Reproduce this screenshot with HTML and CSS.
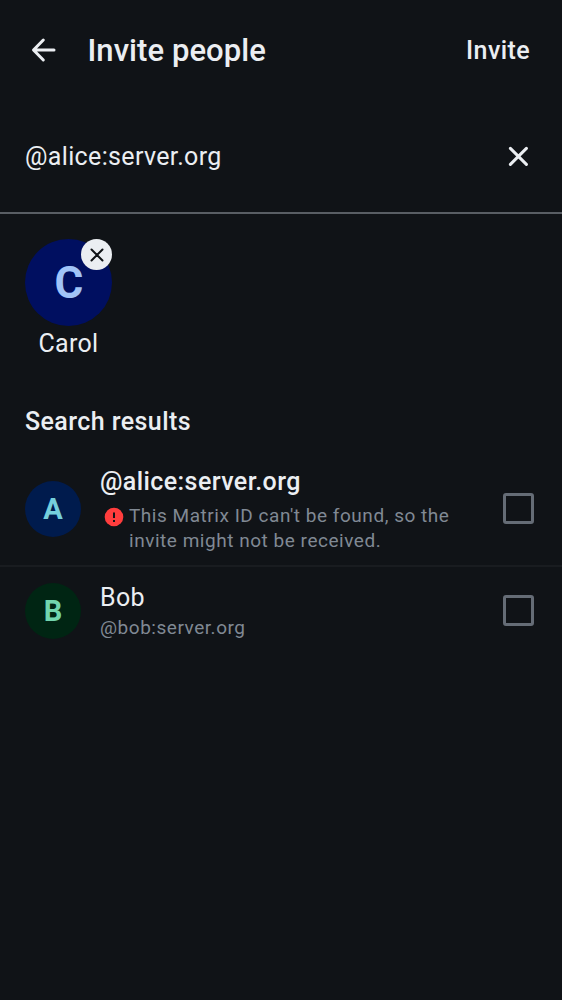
FILE: index.html
```html
<!DOCTYPE html>
<html lang="en">
<head>
<meta charset="utf-8">
<title>Invite people</title>
<link rel="stylesheet" href="styles.css">
</head>
<body>
<header class="topbar">
  <svg class="back" viewBox="0 0 37 37"><path d="M18.3 9L8.5 19l9.8 10M9 19H29"/></svg>
  <h1 class="title">Invite people</h1>
  <span class="invite">Invite</span>
</header>
<div class="search">
  <span class="query">@alice:server.org</span>
  <svg class="clear" viewBox="0 0 20 20"><path d="M2.4 2.4l16 16M18.4 2.4l-16 16"/></svg>
</div>
<section class="selected">
  <div class="person">
    <div class="avatar large">C
      <span class="remove"><svg viewBox="0 0 14 14"><path d="M1.5 1.5l11 11M12.5 1.5l-11 11"/></svg></span>
    </div>
    <span class="person-name">Carol</span>
  </div>
</section>
<h2 class="heading">Search results</h2>
<main class="results">
  <div class="row first">
    <div class="avatar blue">A</div>
    <div class="info">
      <div class="name strong">@alice:server.org</div>
      <div class="warning">
        <svg class="error" viewBox="0 0 20 20"><circle cx="10" cy="10" r="9.3"/><path d="M10 5.4v5.6M10 13v2"/></svg>
        <p class="detail">This Matrix ID can't be found, so the<br>invite might not be received.</p>
      </div>
    </div>
    <span class="checkbox"></span>
  </div>
  <div class="row second">
    <div class="avatar green">B</div>
    <div class="info">
      <div class="name">Bob</div>
      <div class="detail">@bob:server.org</div>
    </div>
    <span class="checkbox"></span>
  </div>
</main>
</body>
</html>
```
FILE: styles.css
```css
* { box-sizing: border-box; }
body { margin: 0; width: 562px; height: 1000px; background: #101317; color: #ebeef2; font-family: Roboto, sans-serif; overflow: hidden; }
svg { display: block; fill: none; stroke: currentColor; stroke-linecap: round; stroke-linejoin: round; flex: none; }
h1, h2, p { margin: 0; }
.topbar { height: 100px; display: flex; align-items: center; padding: 0 32px 0 25px; }
.back { width: 37px; height: 37px; stroke-width: 3; margin-top: -1px; }
.title { margin-left: 25.5px; padding-top: 1px; font-size: 31px; line-height: 40px; font-weight: 500; letter-spacing: 0.07px; }
.invite { margin-left: auto; font-size: 25px; font-weight: 500; letter-spacing: 0.4px; }
.search { height: 114px; padding: 0 34px 0 25px; display: flex; align-items: center; justify-content: space-between; border-bottom: 2px solid #595e64; }
.query { font-size: 25px; letter-spacing: 0.35px; }
.clear { width: 20px; height: 20px; stroke-width: 3; }
.selected { padding: 25px 25px 0; height: 170px; }
.person { width: 87px; display: flex; flex-direction: column; align-items: center; }
.avatar { width: 56px; height: 56px; flex: none; border-radius: 50%; display: flex; align-items: center; justify-content: center; padding-top: 1px; font-weight: 700; font-size: 29px; }
.large { position: relative; width: 87px; height: 87px; padding: 0 0 0 1px; font-size: 44px; background: #000f60; color: #a1c4f8; }
.blue { background: #001b4d; color: #75cfdc; }
.green { background: #002513; color: #72d5ae; }
.remove { position: absolute; right: 0; top: 0; width: 31px; height: 31px; border-radius: 50%; background: #ebeef2; color: #101317; display: flex; align-items: center; justify-content: center; }
.remove svg { width: 14px; height: 14px; stroke-width: 2; }
.person-name { padding-top: 1px; font-size: 25px; line-height: 34px; letter-spacing: 0.3px; }
.heading { padding: 22px 25px 0; height: 68px; font-size: 25px; line-height: 32px; font-weight: 500; letter-spacing: 0.42px; }
.row { display: flex; padding: 0 28px 0 25px; align-items: center; }
.first { height: 115px; border-bottom: 2px solid #191c20; }
.second { height: 87px; }
.info { margin-left: 19px; flex: 1; }
.name { font-size: 25px; line-height: 34px; letter-spacing: 0.3px; }
.strong { font-weight: 500; letter-spacing: 0.42px; margin-bottom: 4px; }
.warning { display: flex; padding-left: 4px; }
.error { width: 20px; height: 20px; margin: 4px 5px 0 0; fill: #ff3d3d; stroke: none; }
.error path { stroke: #101317; stroke-width: 2; stroke-linecap: butt; }
.detail { color: #808994; font-size: 19px; line-height: 25px; letter-spacing: 0.53px; }
.checkbox { width: 31px; height: 31px; border: 3px solid #656c76; border-radius: 3px; flex: none; }
```
